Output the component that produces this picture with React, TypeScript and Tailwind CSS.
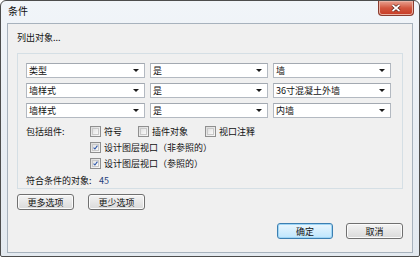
import React from "react";

const font = { fontFamily: '"Noto Sans CJK SC", "Noto Sans", sans-serif' };

function Arrow() {
  return (
    <svg width="6" height="3" viewBox="0 0 6 3" className="shrink-0">
      <path d="M0 0h6L3 3z" fill="#1a1a1a" />
    </svg>
  );
}

function Select({ value, width }: { value: string; width: string }) {
  return (
    <div
      className={`flex h-[15px] items-center justify-between border border-[#b3b9c1] border-t-[#a3a9b1] bg-white pl-[2px] pr-[5px] text-[9px] leading-none text-[#111] ${width}`}
    >
      <span>{value}</span>
      <Arrow />
    </div>
  );
}

function Check({ checked, label }: { checked?: boolean; label: string }) {
  return (
    <div className="flex h-[13px] items-center gap-[3px] text-[9px] leading-none text-[#111]">
      <span className="flex h-[11px] w-[11px] items-center justify-center border border-[#8f8f8f] bg-gradient-to-br from-[#dcdcdc] to-[#f8f8f8] p-[1px]">
        <span className="flex h-full w-full items-center justify-center border border-[#c9c9c9] bg-gradient-to-br from-[#e2e2e2] to-[#fafafa]">
          {checked && (
            <svg width="7" height="7" viewBox="0 0 7 7">
              <path d="M0.8 3.6 L2.7 5.6 L6.2 0.9" stroke="#2b55a8" strokeWidth="1.5" fill="none" />
            </svg>
          )}
        </span>
      </span>
      <span>{label}</span>
    </div>
  );
}

function Button({ label, primary, width }: { label: string; primary?: boolean; width: string }) {
  return (
    <div
      className={`flex h-[16px] items-center justify-center rounded-[3px] border text-[9px] leading-none text-[#111] ${width} ${
        primary
          ? "border-[#3c7fb1] bg-gradient-to-b from-[#eaf6fd] to-[#bee6fd] shadow-[inset_0_0_0_1px_#9fd5f5]"
          : "border-[#707070] bg-gradient-to-b from-[#f4f4f4] to-[#dadada] shadow-[inset_0_0_0_1px_#fbfbfb]"
      }`}
    >
      {label}
    </div>
  );
}

export default function App() {
  return (
    <div className="h-[259px] w-[420px] bg-white" style={font}>
      <div className="flex h-[257px] w-[420px] flex-col rounded-t-[6px] rounded-b-[2px] border border-[#4d4d4d] bg-gradient-to-b from-[#f1f5f9] via-[#e9eef4] to-[#e4eaf0]">
        <div className="flex h-[22px] items-start justify-between pl-[7px] pr-[5px]">
          <span className="mt-[5px] text-[10px] leading-none text-[#111]">条件</span>
          <div className="flex h-[15px] w-[36px] items-center justify-center rounded-b-[4px] border border-t-0 border-[#8a3b2e] bg-gradient-to-b from-[#e8a190] via-[#d2563f] to-[#c63a24] shadow-[inset_0_0_0_1px_#eab2a4]">
            <svg width="10" height="8" viewBox="0 0 10 8">
              <path d="M1.5 1 L8.5 7 M8.5 1 L1.5 7" stroke="#4a1a12" strokeWidth="3" />
              <path d="M1.5 1 L8.5 7 M8.5 1 L1.5 7" stroke="#fff" strokeWidth="1.7" />
            </svg>
          </div>
        </div>
        <div className="mx-[6px] mb-[3px] flex flex-1 flex-col border border-[#a7b2bd] bg-[#f0f0f0]">
          <div className="mt-[8px] pl-[9px] text-[9px] leading-[12px] text-[#111]">列出对象...</div>
          <div className="mx-[9px] mt-[9px] flex h-[136px] flex-col border border-[#d5dfe5] pl-[8px] pt-[9px]">
            <div className="flex flex-col gap-[5px]">
              <div className="flex gap-[5px]">
                <Select value="类型" width="w-[119px]" />
                <Select value="是" width="w-[118px]" />
                <Select value="墙" width="w-[118px]" />
              </div>
              <div className="flex gap-[5px]">
                <Select value="墙样式" width="w-[119px]" />
                <Select value="是" width="w-[118px]" />
                <Select value="36寸混凝土外墙" width="w-[118px]" />
              </div>
              <div className="flex gap-[5px]">
                <Select value="墙样式" width="w-[119px]" />
                <Select value="是" width="w-[118px]" />
                <Select value="内墙" width="w-[118px]" />
              </div>
            </div>
            <div className="mt-[7px] flex">
              <div className="flex h-[13px] w-[64px] items-center text-[9px] leading-none text-[#111]">包括组件:</div>
              <div className="flex flex-col gap-[3px]">
                <div className="flex">
                  <div className="w-[48px]">
                    <Check label="符号" />
                  </div>
                  <div className="w-[67px]">
                    <Check label="插件对象" />
                  </div>
                  <Check label="视口注释" />
                </div>
                <Check checked label="设计图层视口（非参照的）" />
                <Check checked label="设计图层视口（参照的）" />
              </div>
            </div>
            <div className="mt-[4px] flex h-[13px] items-center text-[9px] leading-none text-[#111]">
              <span className="w-[73px]">符合条件的对象:</span>
              <span className="text-[#1f3d7a]">45</span>
            </div>
          </div>
          <div className="ml-[9px] mt-[5px] flex gap-[14px]">
            <Button label="更多选项" width="w-[57px]" />
            <Button label="更少选项" width="w-[57px]" />
          </div>
          <div className="mr-[9px] mt-[13px] flex justify-end gap-[13px]">
            <Button label="确定" primary width="w-[56px]" />
            <Button label="取消" width="w-[57px]" />
          </div>
        </div>
      </div>
    </div>
  );
}
